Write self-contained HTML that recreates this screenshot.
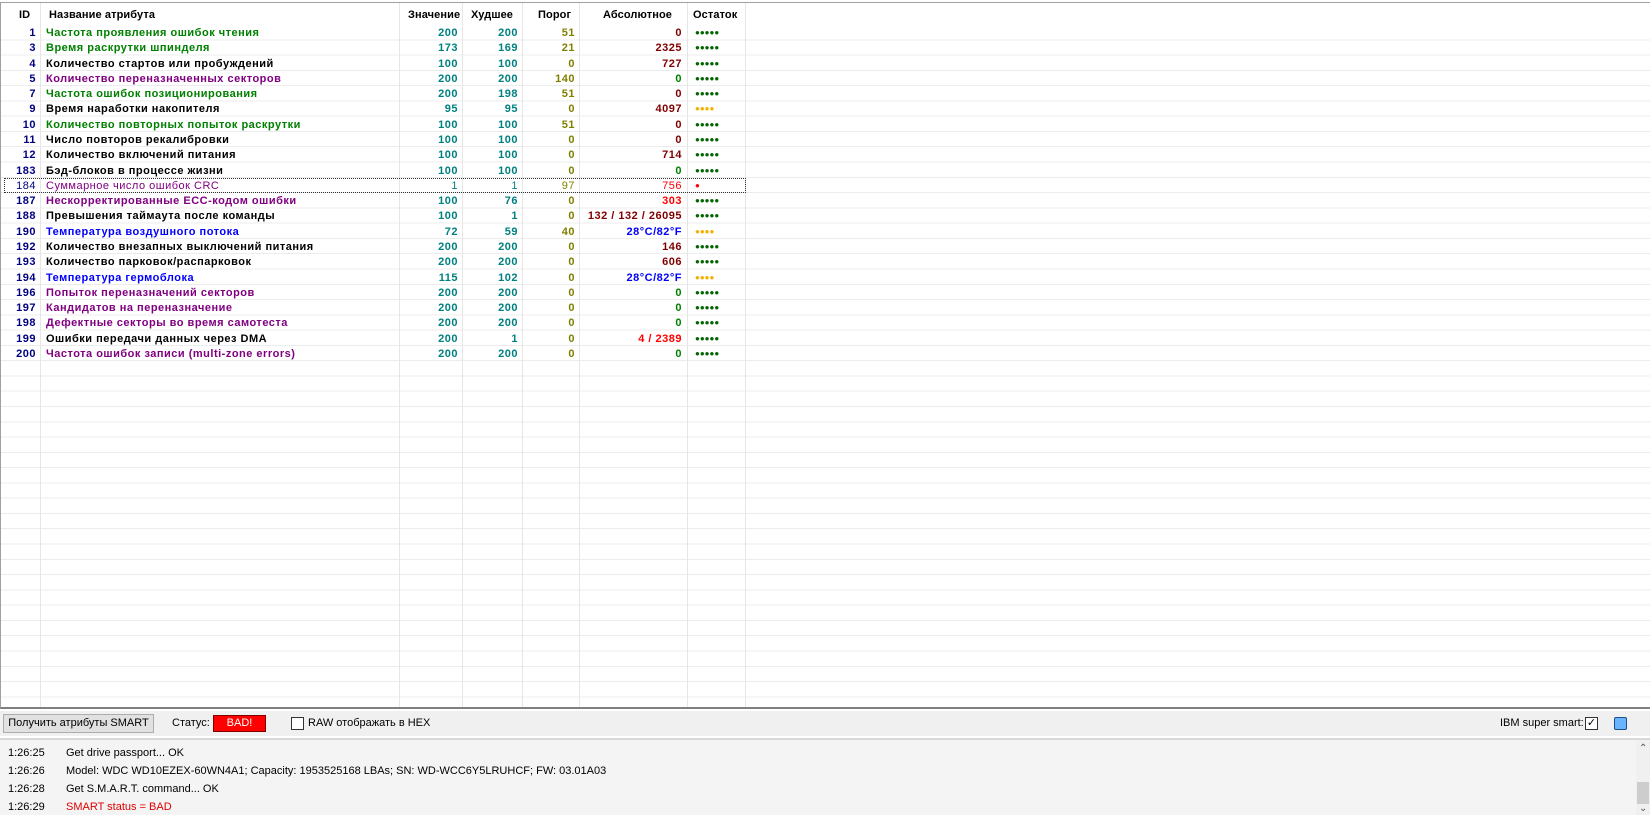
<!DOCTYPE html>
<html><head><meta charset="utf-8"><style>
*{margin:0;padding:0;box-sizing:border-box}
body{width:1650px;height:815px;background:#fff;font-family:"Liberation Sans",Tahoma,sans-serif;position:relative;overflow:hidden}
#grid{position:absolute;left:0;top:2px;width:1650px;height:707px;border-top:1px solid #a0a0a0;border-left:1px solid #a0a0a0;border-bottom:2px solid #808080;overflow:hidden}
#lines{position:absolute;left:0;top:22px;width:100%;bottom:0;background-image:repeating-linear-gradient(to bottom,transparent 0,transparent 14.28px,#ececec 14.28px,#ececec 15.28px)}
.vl{position:absolute;top:0;bottom:0;width:1px;background:#e6e6e6}
.hd{position:absolute;top:0;height:22px;font-size:11px;font-weight:bold;line-height:24px;color:#000;letter-spacing:0.1px}
.r{position:absolute;left:0;width:745px;height:15.28px;font-size:11px;font-weight:bold;line-height:16px;letter-spacing:0.5px}
.r span{position:absolute;top:0;white-space:nowrap}
.id{left:0;width:35px;text-align:right;color:#000080}
.nm{left:45px}
.v{left:399px;width:58px;text-align:right;color:#008080}
.w{left:462px;width:55px;text-align:right;color:#008080}
.t{left:522px;width:52px;text-align:right;color:#808000}
.a{left:579px;width:102px;text-align:right}
.d{left:694px;font-size:8px;letter-spacing:0px}
.g{color:#008000}.p{color:#800080}.k{color:#000}.b{color:#0000ff}
.dr{color:#800000}.rd{color:#ff0000}.gd{color:#006400}.or{color:#f5b000}
#bar{position:absolute;left:0;top:711px;width:1650px;height:25px;background:#f0f0f0;font-size:11px}
#log{position:absolute;left:0;top:738px;width:1650px;height:77px;background:#f4f4f4;border-top:2px solid #d8d8d8;font-size:11px}
#log div{position:absolute;left:8px;height:18px;line-height:18px;white-space:nowrap}
#log b{font-weight:normal;display:inline-block;width:58px}
</style></head><body>
<div id="grid">
<div id="lines"></div>
<div class="vl" style="left:39px"></div><div class="vl" style="left:398px"></div><div class="vl" style="left:461px"></div><div class="vl" style="left:521px"></div><div class="vl" style="left:578px"></div><div class="vl" style="left:686px"></div><div class="vl" style="left:744px"></div>
<div class="hd" style="left:18px">ID</div>
<div class="hd" style="left:48px">Название атрибута</div>
<div class="hd" style="left:407px">Значение</div>
<div class="hd" style="left:470px">Худшее</div>
<div class="hd" style="left:537px">Порог</div>
<div class="hd" style="left:602px">Абсолютное</div>
<div class="hd" style="left:692px">Остаток</div>

<div class="r" style="top:22px"><span class="id">1</span><span class="nm g">Частота проявления ошибок чтения</span><span class="v">200</span><span class="w">200</span><span class="t">51</span><span class="a dr">0</span><span class="d gd">●●●●●</span></div>
<div class="r" style="top:37.3px"><span class="id">3</span><span class="nm g">Время раскрутки шпинделя</span><span class="v">173</span><span class="w">169</span><span class="t">21</span><span class="a dr">2325</span><span class="d gd">●●●●●</span></div>
<div class="r" style="top:52.6px"><span class="id">4</span><span class="nm k">Количество стартов или пробуждений</span><span class="v">100</span><span class="w">100</span><span class="t">0</span><span class="a dr">727</span><span class="d gd">●●●●●</span></div>
<div class="r" style="top:67.8px"><span class="id">5</span><span class="nm p">Количество переназначенных секторов</span><span class="v">200</span><span class="w">200</span><span class="t">140</span><span class="a g">0</span><span class="d gd">●●●●●</span></div>
<div class="r" style="top:83.1px"><span class="id">7</span><span class="nm g">Частота ошибок позиционирования</span><span class="v">200</span><span class="w">198</span><span class="t">51</span><span class="a dr">0</span><span class="d gd">●●●●●</span></div>
<div class="r" style="top:98.4px"><span class="id">9</span><span class="nm k">Время наработки накопителя</span><span class="v">95</span><span class="w">95</span><span class="t">0</span><span class="a dr">4097</span><span class="d or">●●●●</span></div>
<div class="r" style="top:113.7px"><span class="id">10</span><span class="nm g">Количество повторных попыток раскрутки</span><span class="v">100</span><span class="w">100</span><span class="t">51</span><span class="a dr">0</span><span class="d gd">●●●●●</span></div>
<div class="r" style="top:129px"><span class="id">11</span><span class="nm k">Число повторов рекалибровки</span><span class="v">100</span><span class="w">100</span><span class="t">0</span><span class="a dr">0</span><span class="d gd">●●●●●</span></div>
<div class="r" style="top:144.2px"><span class="id">12</span><span class="nm k">Количество включений питания</span><span class="v">100</span><span class="w">100</span><span class="t">0</span><span class="a dr">714</span><span class="d gd">●●●●●</span></div>
<div class="r" style="top:159.5px"><span class="id">183</span><span class="nm k">Бэд-блоков в процессе жизни</span><span class="v">100</span><span class="w">100</span><span class="t">0</span><span class="a g">0</span><span class="d gd">●●●●●</span></div>
<div class="r" style="top:174.8px;font-weight:normal;outline:1px dotted #333;outline-offset:-1px;left:3px;width:742px"><span class="id" style="left:-3px">184</span><span class="nm p" style="left:42px">Суммарное число ошибок CRC</span><span class="v" style="left:396px">1</span><span class="w" style="left:459px">1</span><span class="t" style="left:519px">97</span><span class="a rd" style="left:576px">756</span><span class="d rd" style="left:691px">●</span></div>
<div class="r" style="top:190.1px"><span class="id">187</span><span class="nm p">Нескорректированные ECC-кодом ошибки</span><span class="v">100</span><span class="w">76</span><span class="t">0</span><span class="a rd">303</span><span class="d gd">●●●●●</span></div>
<div class="r" style="top:205.4px"><span class="id">188</span><span class="nm k">Превышения таймаута после команды</span><span class="v">100</span><span class="w">1</span><span class="t">0</span><span class="a dr">132 / 132 / 26095</span><span class="d gd">●●●●●</span></div>
<div class="r" style="top:220.6px"><span class="id">190</span><span class="nm b">Температура воздушного потока</span><span class="v">72</span><span class="w">59</span><span class="t">40</span><span class="a b">28°C/82°F</span><span class="d or">●●●●</span></div>
<div class="r" style="top:235.9px"><span class="id">192</span><span class="nm k">Количество внезапных выключений питания</span><span class="v">200</span><span class="w">200</span><span class="t">0</span><span class="a dr">146</span><span class="d gd">●●●●●</span></div>
<div class="r" style="top:251.2px"><span class="id">193</span><span class="nm k">Количество парковок/распарковок</span><span class="v">200</span><span class="w">200</span><span class="t">0</span><span class="a dr">606</span><span class="d gd">●●●●●</span></div>
<div class="r" style="top:266.5px"><span class="id">194</span><span class="nm b">Температура гермоблока</span><span class="v">115</span><span class="w">102</span><span class="t">0</span><span class="a b">28°C/82°F</span><span class="d or">●●●●</span></div>
<div class="r" style="top:281.8px"><span class="id">196</span><span class="nm p">Попыток переназначений секторов</span><span class="v">200</span><span class="w">200</span><span class="t">0</span><span class="a g">0</span><span class="d gd">●●●●●</span></div>
<div class="r" style="top:297px"><span class="id">197</span><span class="nm p">Кандидатов на переназначение</span><span class="v">200</span><span class="w">200</span><span class="t">0</span><span class="a g">0</span><span class="d gd">●●●●●</span></div>
<div class="r" style="top:312.3px"><span class="id">198</span><span class="nm p">Дефектные секторы во время самотеста</span><span class="v">200</span><span class="w">200</span><span class="t">0</span><span class="a g">0</span><span class="d gd">●●●●●</span></div>
<div class="r" style="top:327.6px"><span class="id">199</span><span class="nm k">Ошибки передачи данных через DMA</span><span class="v">200</span><span class="w">1</span><span class="t">0</span><span class="a rd">4 / 2389</span><span class="d gd">●●●●●</span></div>
<div class="r" style="top:342.9px"><span class="id">200</span><span class="nm p">Частота ошибок записи (multi-zone errors)</span><span class="v">200</span><span class="w">200</span><span class="t">0</span><span class="a g">0</span><span class="d gd">●●●●●</span></div>
</div>

<div id="bar">
<div style="position:absolute;left:3px;top:3px;width:151px;height:19px;border:1px solid #adadad;background:#e1e1e1;line-height:17px;text-align:center;color:#000;white-space:nowrap">Получить атрибуты SMART</div>
<div style="position:absolute;left:172px;top:0;line-height:25px">Статус:</div>
<div style="position:absolute;left:213px;top:4px;width:53px;height:17px;background:#ff0000;border:1px solid #800000;color:#fff;text-align:center;line-height:15px">BAD!</div>
<div style="position:absolute;left:291px;top:6px;width:13px;height:13px;border:1px solid #333;background:#fff"></div>
<div style="position:absolute;left:308px;top:0;line-height:25px;white-space:nowrap">RAW отображать в HEX</div>
<div style="position:absolute;left:1500px;top:0;line-height:25px;white-space:nowrap">IBM super smart:</div>
<div style="position:absolute;left:1585px;top:6px;width:13px;height:13px;border:1px solid #333;background:#fff;font-size:11px;line-height:11px;text-align:center">✓</div>
<div style="position:absolute;left:1614px;top:6px;width:13px;height:13px;border:1px solid #1a4f8a;background:#69b4ff;border-radius:2px"></div>
</div>

<div id="log">
<div style="top:4px"><b>1:26:25</b>Get drive passport... OK</div>
<div style="top:22px"><b>1:26:26</b>Model: WDC WD10EZEX-60WN4A1; Capacity: 1953525168 LBAs; SN: WD-WCC6Y5LRUHCF; FW: 03.01A03</div>
<div style="top:40px"><b>1:26:28</b>Get S.M.A.R.T. command... OK</div>
<div style="top:58px"><b>1:26:29</b><span style="color:#e00000">SMART status = BAD</span></div>
<div style="left:1636px;top:0;width:14px;height:75px;background:#f0f0f0"></div>
<div style="left:1637px;top:42px;width:12px;height:22px;background:#cdcdcd"></div>
<div style="left:1639px;top:0;font-size:10px;color:#555">⌃</div>
<div style="left:1639px;top:60px;font-size:10px;color:#555">⌄</div>
</div>
</body></html>
